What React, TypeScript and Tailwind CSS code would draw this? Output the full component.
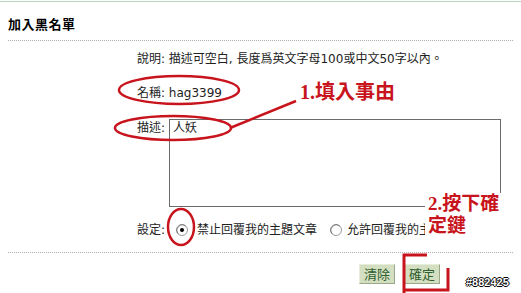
import React from "react";

const FONT = '"DejaVu Sans", "Noto Sans CJK TC", sans-serif';
const RED = "#c8141c";

function Radio({ checked }: { checked?: boolean }) {
  return (
    <svg width="12" height="12" viewBox="0 0 12 12" className="shrink-0">
      <circle cx="6" cy="6" r="5.5" fill="#fff" stroke="#9a9a9a" strokeWidth="1" />
      <path d="M2.2 9.8 A5.4 5.4 0 0 1 9.8 2.2" fill="none" stroke="#7a7a7a" strokeWidth="1" />
      {checked && <circle cx="6" cy="6" r="2" fill="#000" />}
    </svg>
  );
}

export default function App() {
  return (
    <div
      className="relative w-[521px] h-[293px] bg-white overflow-hidden text-[#222]"
      style={{ fontFamily: FONT }}
    >
      <div className="border-t border-[#b9d5b9] mt-[1px]" />
      <div className="px-[8px] pt-[13px]">
        <div className="text-[13px] font-bold leading-[18px] text-black tracking-[0.5px]" style={{ fontFamily: '"Noto Sans CJK TC", sans-serif' }}>
          加入黑名單
        </div>
        <div className="mt-[7px] border-t border-dotted border-[#b0b0b0]" />
      </div>

      <div className="pl-[137px] text-[12px] leading-[16px]">
        <div className="mt-[10px]">說明: 描述可空白, 長度爲英文字母100或中文50字以內。</div>
        <div className="mt-[18px]">名稱: hag3399</div>
        <div className="mt-[18px] flex items-start">
          <span className="mt-[1px] w-[32px]">描述:</span>
          <div className="w-[332px] h-[88px] border border-[#6a6a6a] px-[3px] py-[0px]">人妖</div>
        </div>
        <div className="mt-[15px] flex items-center">
          <span className="w-[39px]">設定:</span>
          <Radio checked />
          <span className="ml-[9px]">禁止回覆我的主題文章</span>
          <span className="ml-[13px]"><Radio /></span>
          <span className="ml-[5px] w-[83px] overflow-hidden whitespace-nowrap">允許回覆我的主題文章</span>
        </div>
      </div>

      <div className="mx-[8px] mt-[14px] border-t border-dotted border-[#b0b0b0]" />

      <div className="flex justify-end pr-[81px] mt-[11px] gap-[9px] text-[12px]">
        <button className="h-[20px] px-[4px] bg-[#d4dfc2] text-[#2f5e2f] border border-[#e6eedb] border-r-[#9aa88a] border-b-[#9aa88a] leading-[18px]" style={{ fontFamily: '"Noto Sans CJK TC", sans-serif', fontSize: 13 }}>
          清除
        </button>
        <button className="h-[20px] px-[4px] bg-[#d4dfc2] text-[#2f5e2f] border border-[#e6eedb] border-r-[#9aa88a] border-b-[#9aa88a] leading-[18px]" style={{ fontFamily: '"Noto Sans CJK TC", sans-serif', fontSize: 13 }}>
          確定
        </button>
      </div>

      {/* Annotations */}
      <svg className="absolute left-0 top-0" width="521" height="293" viewBox="0 0 521 293">
        <ellipse cx="179" cy="90" rx="60" ry="14" fill="none" stroke={RED} strokeWidth="2.5" />
        <ellipse cx="173" cy="128" rx="58" ry="12" fill="none" stroke={RED} strokeWidth="2.5" />
        <line x1="230" y1="128" x2="296" y2="101" stroke={RED} strokeWidth="2.5" />
        <ellipse cx="181" cy="227" rx="13" ry="18" fill="none" stroke={RED} strokeWidth="2.5" />
        <path d="M404 293 L404 255 L427 255" fill="none" stroke={RED} strokeWidth="3" />
        <path d="M404 290 L448 290 L448 268" fill="none" stroke={RED} strokeWidth="3" />
      </svg>

      <div
        className="absolute left-[300px] top-[80px] text-[20px] font-bold leading-[24px] whitespace-nowrap"
        style={{ color: RED, fontFamily: '"Liberation Serif", "Noto Sans CJK TC", serif' }}
      >
        1.填入事由
      </div>

      <div
        className="absolute left-[425px] top-[193px] w-[90px] h-[46px] bg-white pl-[3px] text-[19px] font-bold leading-[22px] whitespace-nowrap"
        style={{ color: RED, fontFamily: '"Liberation Serif", "Noto Sans CJK TC", serif' }}
      >
        <div>2.按下確</div>
        <div>定鍵</div>
      </div>

      <div
        className="absolute left-[466px] top-[276px] text-[11px] font-bold text-white leading-[13px]"
        style={{
          fontFamily: '"Liberation Sans", sans-serif',
          textShadow: "1px 0 0 #000, -1px 0 0 #000, 0 1px 0 #000, 0 -1px 0 #000",
        }}
      >
        #882425
      </div>
    </div>
  );
}
